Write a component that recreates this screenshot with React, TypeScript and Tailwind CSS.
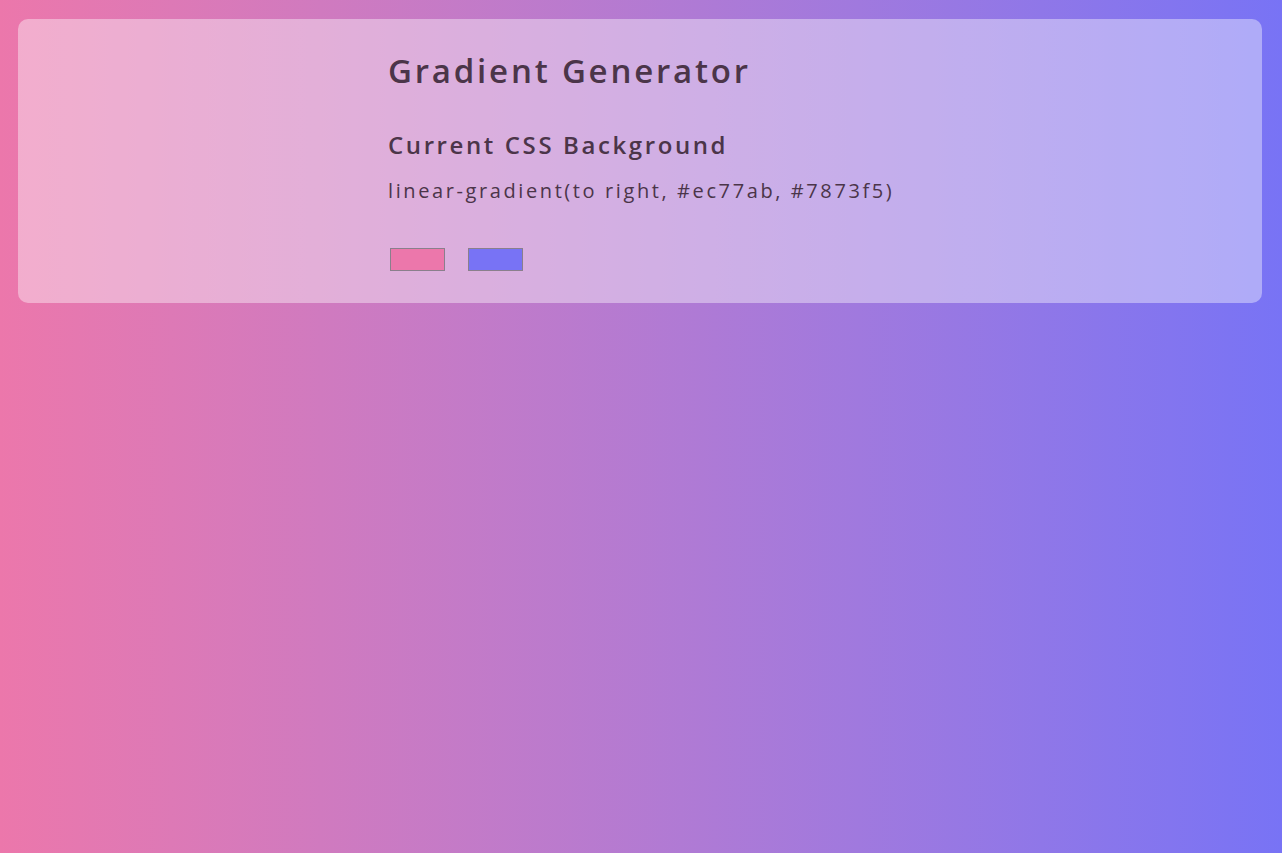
const Swatch = ({color}: {color: string}) => {
  return <div className={`h-[23px] w-[55px] border-[1.5px] border-[#8a7f8c] ${color}`} />
}

const App = () => {
  return (
    <div className="min-h-[853px] w-full bg-gradient-to-r from-[#ec77ab] to-[#7873f5] pt-[19px] pl-[18px] pr-[20px] font-['Open_Sans',sans-serif] text-[#4b3549]">
      <div className="rounded-[10px] bg-white/40 pl-[370px] pt-[35px] h-[284px]">
        <h1 className="text-[33px] leading-[1] font-semibold tracking-[2.8px]">Gradient Generator</h1>
        <h2 className="mt-[46px] text-[24px] leading-[1] font-semibold tracking-[2.6px]">Current CSS Background</h2>
        <p className="mt-[22px] text-[20px] leading-[1.2] tracking-[2.6px]">
          linear-gradient(to right, #ec77ab, #7873f5)
        </p>
        <div className="mt-[45px] ml-[2px] flex gap-[23px]">
          <Swatch color="bg-[#ec77ab]" />
          <Swatch color="bg-[#7873f5]" />
        </div>
      </div>
    </div>
  )
}

export default App
